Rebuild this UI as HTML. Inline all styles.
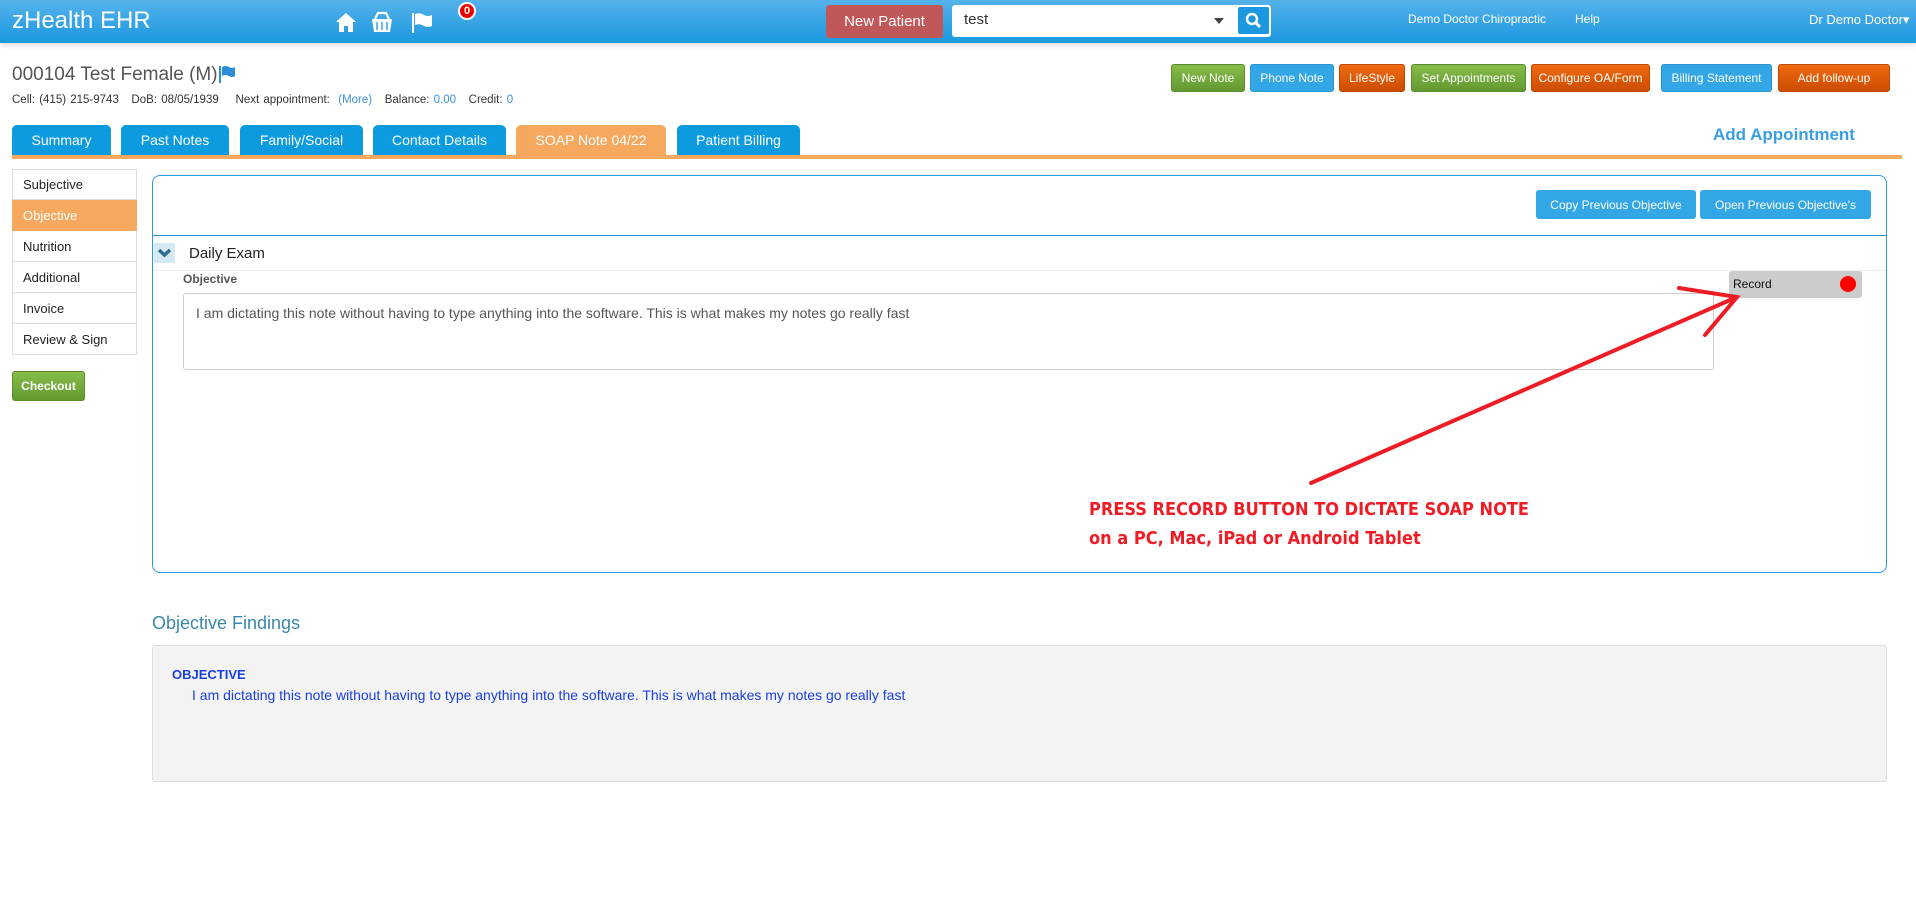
<!DOCTYPE html>
<html><head><meta charset="utf-8"><style>
*{box-sizing:border-box;margin:0;padding:0}
body{width:1916px;height:909px;background:#fff;font-family:"Liberation Sans",Arial,sans-serif;position:relative;overflow:hidden;color:#333}
.a{position:absolute}
.hdr{left:0;top:0;width:1916px;height:43px;background:linear-gradient(#55b2ea,#1b98e0);box-shadow:0 2px 6px rgba(0,0,0,.15)}
.btn{position:absolute;color:#fff;font-size:12px;text-align:center;border-radius:3px;display:flex;align-items:center;justify-content:center}
.g{background:linear-gradient(#86bd4a,#62982f);border:1px solid #5a8c2a}
.b{background:#33a7e6;border:1px solid #2a95d0}
.o{background:linear-gradient(#f06a10,#cc4c00);border:1px solid #c04800}
.tab{position:absolute;top:125px;height:30px;background:#0d9be0;color:#fff;font-size:14px;border-radius:5px 5px 0 0;display:flex;align-items:center;justify-content:center}
.mi{position:absolute;left:12px;width:125px;height:31px;border:1px solid #ddd;border-top:none;font-size:13px;color:#222;padding:8px 0 0 10px}
</style></head><body>
<div class="a hdr"></div>
<div class="a" style="left:12px;top:7px;color:#fff;font-size:24px">zHealth EHR</div>
<svg class="a" style="left:334px;top:10px" width="100" height="24" viewBox="0 0 100 24">
<path d="M2 12 L12 3 L22 12 L19 12 L19 22 L14 22 L14 16 L10 16 L10 22 L5 22 L5 12Z" fill="#fff"/>
<path d="M41 9 L44 3 L52 3 L55 9" stroke="#fff" stroke-width="2.2" fill="none"/><path d="M38 9 H58 L56 22 H40Z" fill="#fff"/><path d="M43 12v8M48 12v8M53 12v8" stroke="#3aa6e6" stroke-width="1.5"/>
<path d="M79 3 V23" stroke="#fff" stroke-width="2"/><path d="M81 4 Q86 2 90 5 Q94 7 98 5 V16 Q94 18 90 16 Q86 13 81 15Z" fill="#fff"/>
</svg>
<div class="a" style="left:458px;top:2px;width:18px;height:18px;border-radius:50%;background:#e00;border:2px solid #fff;color:#fff;font-size:11px;font-weight:bold;text-align:center;line-height:14px">0</div>
<div class="btn" style="left:826px;top:5px;width:117px;height:33px;background:#c0585a;font-size:15px;border-radius:3px">New Patient</div>
<div class="a" style="left:952px;top:5px;width:319px;height:32px;background:#fff;border-radius:3px;border:2px solid #fff"></div>
<div class="a" style="left:964px;top:11px;font-size:15px;color:#333">test</div>
<div class="a" style="left:1214px;top:18px;border-left:5px solid transparent;border-right:5px solid transparent;border-top:6px solid #444"></div>
<div class="a" style="left:1238px;top:7px;width:31px;height:27px;background:#1b98e0;border-radius:2px"></div>
<svg class="a" style="left:1245px;top:12px" width="17" height="17"><circle cx="7" cy="7" r="5" stroke="#fff" stroke-width="2.5" fill="none"/><path d="M11 11 L15 15" stroke="#fff" stroke-width="3"/></svg>
<div class="a" style="left:1408px;top:12px;color:#fff;font-size:12px">Demo Doctor Chiropractic</div>
<div class="a" style="left:1575px;top:12px;color:#fff;font-size:12px">Help</div>
<div class="a" style="left:1809px;top:12px;color:#fff;font-size:13px">Dr Demo Doctor▾</div>

<div class="a" style="left:12px;top:64px;font-size:19px;color:#555">000104 Test Female (M)</div>
<svg class="a" style="left:218px;top:64px" width="18" height="20"><path d="M2 2V19" stroke="#2a8fd8" stroke-width="2"/><path d="M4 3 Q8 1 11 3 Q14 5 17 3 V12 Q14 14 11 12 Q8 10 4 12Z" fill="#2a8fd8"/></svg>
<div class="a" style="left:12px;top:94px;font-size:11.5px;color:#333;word-spacing:1px">Cell: (415) 215-9743 &nbsp; DoB: 08/05/1939 &nbsp;&nbsp; Next appointment: &nbsp;<span style="color:#3a8fd8">(More)</span>&nbsp;&nbsp; Balance: <span style="color:#3a8fd8">0.00</span>&nbsp;&nbsp; Credit: <span style="color:#3a8fd8">0</span></div>

<div class="btn g" style="left:1171px;top:64px;width:74px;height:28px">New Note</div>
<div class="btn b" style="left:1250px;top:64px;width:84px;height:28px">Phone Note</div>
<div class="btn o" style="left:1339px;top:64px;width:66px;height:28px">LifeStyle</div>
<div class="btn g" style="left:1411px;top:64px;width:115px;height:28px">Set Appointments</div>
<div class="btn o" style="left:1531px;top:64px;width:119px;height:28px">Configure OA/Form</div>
<div class="btn b" style="left:1661px;top:64px;width:111px;height:28px">Billing Statement</div>
<div class="btn o" style="left:1778px;top:64px;width:112px;height:28px">Add follow-up</div>

<div class="tab" style="left:12px;width:99px">Summary</div>
<div class="tab" style="left:121px;width:108px">Past Notes</div>
<div class="tab" style="left:240px;width:123px">Family/Social</div>
<div class="tab" style="left:373px;width:133px">Contact Details</div>
<div class="tab" style="left:516px;width:150px;background:#f5a85e">SOAP Note 04/22</div>
<div class="tab" style="left:677px;width:123px">Patient Billing</div>
<div class="a" style="left:1713px;top:125px;color:#3a9ee0;font-size:17px;font-weight:bold">Add Appointment</div>
<div class="a" style="left:12px;top:155px;width:1890px;height:4px;background:#f5a85e"></div>

<div class="a" style="left:12px;top:169px;width:125px;height:1px;background:#ddd"></div>
<div class="mi" style="top:169px">Subjective</div>
<div class="mi" style="top:200px;background:#f5a85e;color:#fff;border-color:#f5a85e">Objective</div>
<div class="mi" style="top:231px">Nutrition</div>
<div class="mi" style="top:262px">Additional</div>
<div class="mi" style="top:293px">Invoice</div>
<div class="mi" style="top:324px">Review &amp; Sign</div>
<div class="btn g" style="left:12px;top:371px;width:73px;height:30px;font-weight:bold">Checkout</div>

<div class="a" style="left:152px;top:175px;width:1735px;height:398px;border:1px solid #2a9be0;border-radius:8px"></div>
<div class="btn" style="left:1536px;top:190px;width:160px;height:29px;background:#33a7e6">Copy Previous Objective</div>
<div class="btn" style="left:1700px;top:190px;width:171px;height:29px;background:#33a7e6">Open Previous Objective's</div>
<div class="a" style="left:153px;top:235px;width:1733px;height:1px;background:#2a8fd0"></div>
<div class="a" style="left:154px;top:243px;width:21px;height:20px;background:#d5e9f5"></div>
<svg class="a" style="left:157px;top:247px" width="15" height="12"><path d="M2 3 L7.5 8 L13 3" stroke="#2f6d90" stroke-width="3.5" fill="none"/></svg>
<div class="a" style="left:189px;top:245px;font-size:15px;color:#222">Daily Exam</div>
<div class="a" style="left:153px;top:270px;width:1733px;height:1px;background:#eee"></div>
<div class="a" style="left:183px;top:272px;font-size:12px;font-weight:bold;color:#555">Objective</div>
<div class="a" style="left:183px;top:293px;width:1531px;height:77px;border:1px solid #ccc;border-radius:3px;padding:11px 12px;font-size:14px;color:#555">I am dictating this note without having to type anything into the software. This is what makes my notes go really fast</div>
<div class="a" style="left:1729px;top:271px;width:133px;height:27px;background:#ccc;border-radius:3px;font-size:12px;color:#111;padding:6px 4px">Record</div>
<div class="a" style="left:1840px;top:276px;width:16px;height:16px;border-radius:50%;background:#f00"></div>
<svg class="a" style="left:0;top:0" width="1916" height="909">
<path d="M1311 483 L1737 297 M1679 288 L1737 297 L1705 335" stroke="#ee1c25" stroke-width="4" fill="none" stroke-linecap="round"/>
</svg>
<div class="a" style="left:1089px;top:495px;color:#ee1c25;font-size:18px;font-weight:bold;line-height:29px;font-family:'DejaVu Sans Condensed','Liberation Sans',sans-serif">PRESS RECORD BUTTON TO DICTATE SOAP NOTE<br>on a PC, Mac, iPad or Android Tablet</div>

<div class="a" style="left:152px;top:613px;font-size:18px;color:#3a87ad">Objective Findings</div>
<div class="a" style="left:152px;top:645px;width:1735px;height:137px;background:#f3f3f3;border:1px solid #ddd;border-radius:3px"></div>
<div class="a" style="left:172px;top:667px;font-size:13px;font-weight:bold;color:#1a3fe0">OBJECTIVE</div>
<div class="a" style="left:192px;top:687px;font-size:14px;color:#1a3fe0">I am dictating this note without having to type anything into the software. This is what makes my notes go really fast</div>
</body></html>
